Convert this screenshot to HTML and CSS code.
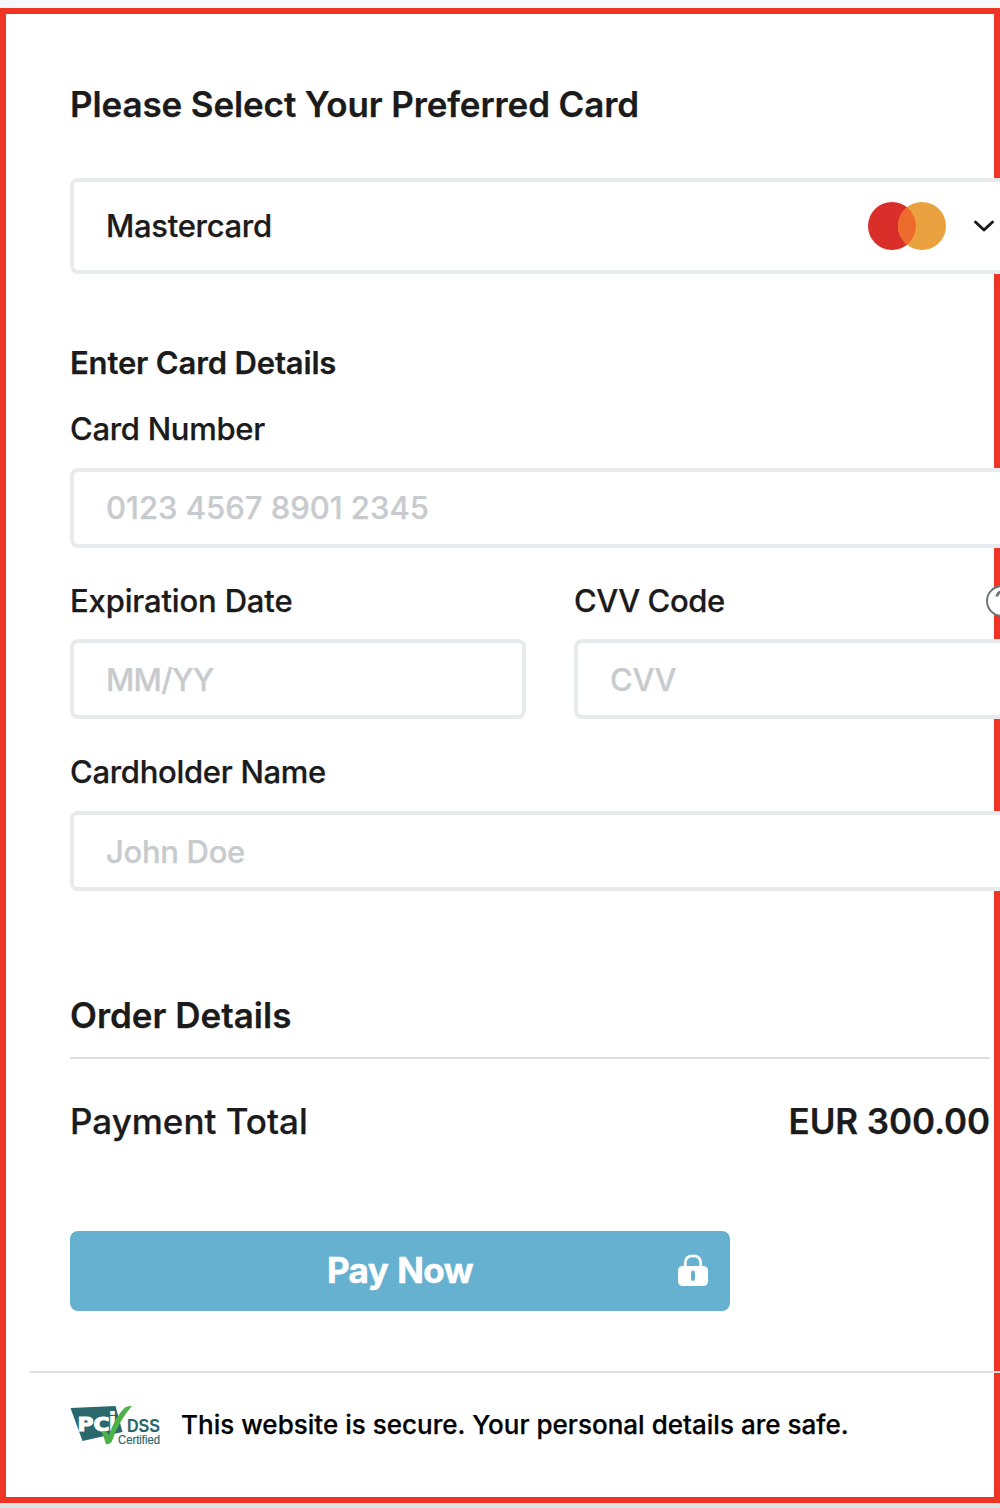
FILE: index.html
```html
<!DOCTYPE html>
<html lang="en">
<head>
<meta charset="utf-8">
<title>Payment</title>
<link rel="stylesheet" href="styles.css">
</head>
<body>
<main class="frame">
  <form class="form">
    <h1 class="title">Please Select Your Preferred Card</h1>
    <div class="select">
      <span class="select-name">Mastercard</span>
      <svg class="brand" width="78" height="48" viewBox="0 0 78 48">
        <circle cx="24" cy="24" r="24" fill="#da2e2b"/>
        <circle cx="54" cy="24" r="24" fill="#eaa140"/>
        <path d="M39 5.3a24 24 0 0 1 0 37.4a24 24 0 0 1 0-37.4z" fill="#ee6b2d"/>
      </svg>
      <svg class="chevron" width="22" height="14" viewBox="0 0 22 14"><path d="M2.500 3L11 11l8.500-8" fill="none" stroke="#1b1b1b" stroke-width="3" stroke-linecap="round" stroke-linejoin="round"/></svg>
    </div>

    <h2 class="subtitle">Enter Card Details</h2>
    <label class="label first">Card Number</label>
    <div class="input digits">0123 4567 8901 2345</div>
    <div class="columns">
      <div class="column">
        <label class="label date">Expiration Date</label>
        <div class="input expiry">MM/YY</div>
      </div>
      <div class="column">
        <label class="label cvv"><span>CVV Code</span>
          <svg width="32" height="32" viewBox="0 0 32 32"><circle cx="16" cy="16" r="15" fill="#fff" stroke="#6d757b" stroke-width="2"/><path d="M11 11.500c0-6 10-6 10-.3c0 3.800-5 3.600-5 8" fill="none" stroke="#6d757b" stroke-width="3"/><circle cx="16" cy="24" r="2" fill="#6d757b"/></svg>
        </label>
        <div class="input">CVV</div>
      </div>
    </div>
    <label class="label">Cardholder Name</label>
    <div class="input">John Doe</div>
  </form>

  <section class="order">
    <h2 class="order-title">Order Details</h2>
    <div class="total"><span>Payment Total</span><strong>EUR 300.00</strong></div>
    <div class="pay">
      <span>Pay Now</span>
      <svg class="lock" width="32" height="32" viewBox="0 0 32 32">
        <path d="M8.300 13V9c0-4.500 2.500-7.200 7.700-7.200S23.700 4.500 23.700 9v4" fill="none" stroke="#fff" stroke-width="2.800"/>
        <rect x="1" y="12" width="30" height="20" rx="4.500" fill="#fff"/>
        <rect x="14" y="16.500" width="4" height="10.500" rx="2" fill="#66b1cf"/>
      </svg>
    </div>
  </section>

  <footer class="secure">
    <svg class="pci" width="92" height="42" viewBox="0 0 92 42">
      <path d="M.5 3L45.500 1l7 26L12.500 36z" fill="#2b686e"/>
      <text class="pci-name" x="7.500" y="26" textLength="32" lengthAdjust="spacingAndGlyphs">PC</text>
      <text class="pci-i" x="38" y="26">i</text>
      <text class="pci-dss" x="57" y="26.500" textLength="33" lengthAdjust="spacingAndGlyphs">DSS</text>
      <text class="pci-cert" x="48" y="38.500" textLength="42" lengthAdjust="spacingAndGlyphs">Certified</text>
      <path d="M31.500 27q4.500-2.500 7.500 3Q45.500 11 55 2.500q3-2 7-1.500Q50 14 42 36q-2 3.500-6 3.300Q34 32 31.500 27z" fill="#4db148"/>
    </svg>
    <span class="secure-text">This website is secure. Your personal details are safe.</span>
  </footer>
</main>
</body>
</html>
```

FILE: styles.css
```css
* { box-sizing: border-box; }
html { overflow: hidden; background: #dfe3e5; }
body {
  margin: 0;
  height: 1508px;
  padding-top: 8px;
  overflow: hidden;
  background: linear-gradient(#f7f8fb 0 8px, #dfe3e5 8px);
  color: #1b1b1b;
  font-family: Inter, "Liberation Sans", sans-serif;
  font-size: 31px;
  font-weight: 500;
  line-height: 40px;
  letter-spacing: -.3px;
  -webkit-text-stroke: .25px;
}
.frame {
  height: 1495px;
  border: 6px solid #ee3424;
  background: #fff;
  padding: 68px 0 0 24px;
}
.form { width: 960px; margin-left: 40px; }
h1, h2 { margin: 0; font-weight: 600; }
.title { font-size: 35px; line-height: 44px; margin-bottom: 52px; letter-spacing: -.12px; }
.select, .input {
  display: flex;
  align-items: center;
  border: 4px solid #e7ebee;
  border-radius: 8px;
  background: #fff;
  padding: 0 32px;
}
.select { height: 96px; }
.select-name { flex: 1; }
.brand { margin-right: 27px; }
.chevron { margin-right: -1px; }
.input { height: 80px; padding-top: 1px; color: #c8cbce; }
.input.digits { padding-top: 0; letter-spacing: 0; }
.input.expiry { letter-spacing: -.7px; }
.subtitle { margin-top: 69px; font-size: 31px; line-height: 40px; letter-spacing: -.16px; }
.label { display: block; margin: 33px 0 19px; }
.label.first { margin-top: 26px; }
.label.date { letter-spacing: -.16px; }
.columns { display: flex; gap: 48px; }
.column { flex: 1; }
.column .label { margin-bottom: 18px; }
.label.cvv { display: flex; align-items: center; justify-content: space-between; padding-right: 12px; letter-spacing: -.45px; }
.order { width: 920px; margin: 102px 0 0 40px; font-size: 35px; line-height: 44px; letter-spacing: 0; }
.order-title { font-size: 35px; line-height: 44px; padding-bottom: 20px; border-bottom: 2px solid #dddfe0; }
.total { display: flex; justify-content: space-between; margin-top: 40px; }
.total strong { font-weight: 600; letter-spacing: -.1px; }
.pay {
  display: grid;
  grid-template-columns: 1fr auto 1fr;
  align-items: center;
  width: 660px;
  height: 80px;
  margin-top: 88px;
  padding: 0 21px 2px;
  border-radius: 8px;
  background: #66b1cf;
  color: #fff;
  font-weight: 700;
  letter-spacing: -.5px;
  word-spacing: 1px;
  -webkit-text-stroke: .5px;
}
.pay span { grid-column: 2; }
.lock { justify-self: end; }
.secure {
  display: flex;
  align-items: center;
  width: 1000px;
  height: 108px;
  margin-top: 60px;
  padding-left: 40px;
  border-top: 2px solid #dddfe0;
}
.secure-text { margin: -2px 0 0 19px; font-size: 26px; letter-spacing: .02px; color: #000; white-space: nowrap; }
.pci { overflow: visible; letter-spacing: 0; -webkit-text-stroke: 0; }
.pci-name { font: 700 19px "DejaVu Sans", sans-serif; fill: #fff; stroke: #fff; stroke-width: 1; }
.pci-i { font: 700 26px "DejaVu Sans", sans-serif; fill: #fff; }
.pci-dss { font: 700 19px "Liberation Sans", sans-serif; fill: #2b686e; }
.pci-cert { font: 400 12.500px "Liberation Sans", sans-serif; fill: #2b686e; stroke: #2b686e; stroke-width: .2; }
```
